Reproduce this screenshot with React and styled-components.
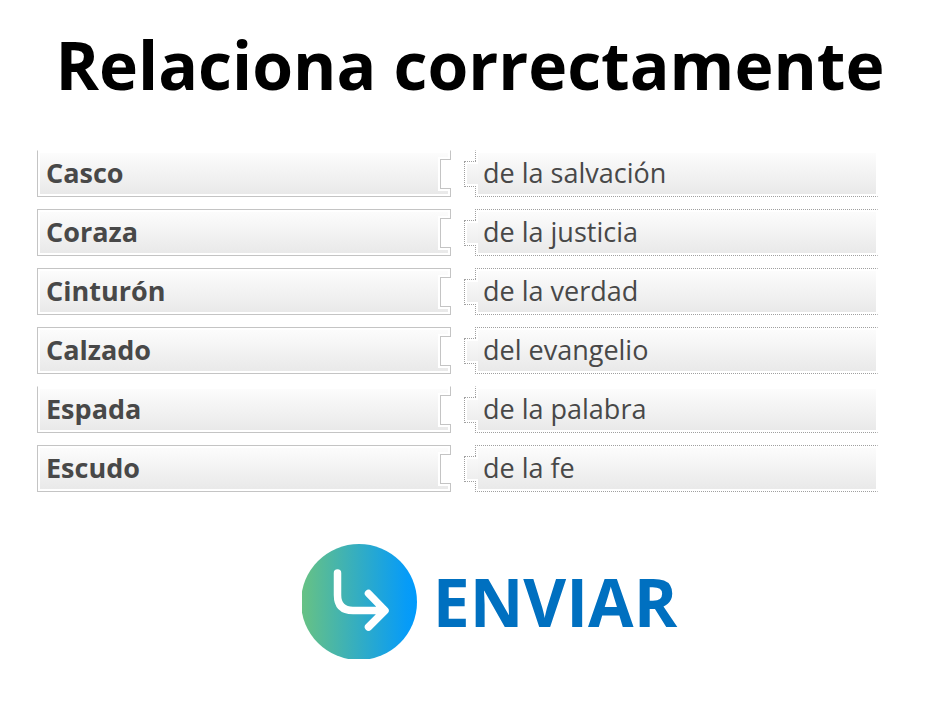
import React from "react";
import styled, { createGlobalStyle } from "styled-components";

const GlobalStyle = createGlobalStyle`
  *, *::before, *::after { box-sizing: border-box; }
  body {
    margin: 0;
    background: #fff;
    font-family: "Open Sans", "Noto Sans", sans-serif;
  }
`;

const Page = styled.main`
  display: flex;
  flex-direction: column;
  padding: 19px 0 40px;
`;

const Title = styled.h1`
  margin: 0 0 41px;
  font-size: 66px;
  line-height: 90px;
  font-weight: 700;
  text-align: center;
  color: #000;
`;

const Pairs = styled.ul`
  list-style: none;
  display: flex;
  flex-direction: column;
  gap: 12px;
  margin: 0 62px 0 37px;
  padding: 0;
`;

const Pair = styled.li`
  display: grid;
  grid-template-columns: 1fr 1fr;
  gap: 13px;
`;

const Piece = styled.div`
  position: relative;
  height: 47px;
  padding: 2px;
  font-size: 27px;
  line-height: 40px;
  color: #484848;
`;

const Term = styled(Piece)`
  border: 1px solid #c4c4c4;
  border-top-color: ${({ $open }) => ($open ? "transparent" : "#c4c4c4")};
  background:
    linear-gradient(#fff, #fff) right 4px / 10px 34px no-repeat content-box,
    linear-gradient(#fcfcfc, #e9e9e9) content-box;
  font-weight: 700;
  text-indent: 6px;

  &::after {
    content: "";
    position: absolute;
    top: 8px;
    right: -1px;
    width: 11px;
    height: 30px;
    border: 1px solid #c4c4c4;
    border-right: 0;
    background: #fff;
  }
`;

const Match = styled(Piece)`
  margin-left: 11px;
  padding-right: 1px;
  border: 1px dotted #a0a0a0;
  border-right-color: transparent;
  border-top-color: ${({ $open }) => ($open ? "transparent" : "#a0a0a0")};
  background: linear-gradient(#fcfcfc, #e9e9e9) content-box;
  text-indent: 5px;

  &::before {
    content: "";
    position: absolute;
    top: 10px;
    left: -12px;
    width: 14px;
    height: 26px;
    padding: 2px 0 2px 2px;
    border: 1px dotted #a0a0a0;
    border-right: 0;
    background:
      linear-gradient(#f8f8f8, #eeeeee) content-box,
      #fff;
    clip-path: polygon(0 0, 12px 0, 12px 1px, 100% 1px, 100% 25px, 12px 25px, 12px 100%, 0 100%);
  }
`;

const SubmitButton = styled.button`
  display: flex;
  align-items: center;
  align-self: center;
  gap: 16px;
  margin: 52px 0 0 39px;
  padding: 0;
  border: 0;
  background: none;
  font: 700 66px/90px "Open Sans", "Noto Sans", sans-serif;
  color: #0070c0;
  cursor: pointer;
`;

const Label = styled.span`
  padding-bottom: 2px;
`;

const PAIRS = [
  { term: "Casco", match: "de la salvación", open: true },
  { term: "Coraza", match: "de la justicia" },
  { term: "Cinturón", match: "de la verdad" },
  { term: "Calzado", match: "del evangelio" },
  { term: "Espada", match: "de la palabra", open: true },
  { term: "Escudo", match: "de la fe" },
];

function SendIcon() {
  return (
    <svg width="115" height="115" viewBox="0 0 115 115" aria-hidden="true">
      <defs>
        <linearGradient id="send-fill" x1="0" y1="0" x2="1" y2="0">
          <stop offset="0" stopColor="#68c283" />
          <stop offset="0.9" stopColor="#089cf6" />
          <stop offset="1" stopColor="#009afd" />
        </linearGradient>
      </defs>
      <circle cx="57" cy="58" r="58" fill="url(#send-fill)" />
      <path
        d="M35.5 29V51Q35.5 66.500 51 66.500H82M66.500 49.500L83 66.500L66.500 83"
        fill="none"
        stroke="#fff"
        strokeWidth="7.500"
        strokeLinecap="round"
        strokeLinejoin="round"
      />
    </svg>
  );
}

export default function App() {
  return (
    <>
      <GlobalStyle />
      <Page>
        <Title>Relaciona correctamente</Title>
        <Pairs>
          {PAIRS.map(({ term, match, open }) => (
            <Pair key={term}>
              <Term $open={open}>{term}</Term>
              <Match $open={open}>{match}</Match>
            </Pair>
          ))}
        </Pairs>
        <SubmitButton type="button">
          <SendIcon />
          <Label>ENVIAR</Label>
        </SubmitButton>
      </Page>
    </>
  );
}
